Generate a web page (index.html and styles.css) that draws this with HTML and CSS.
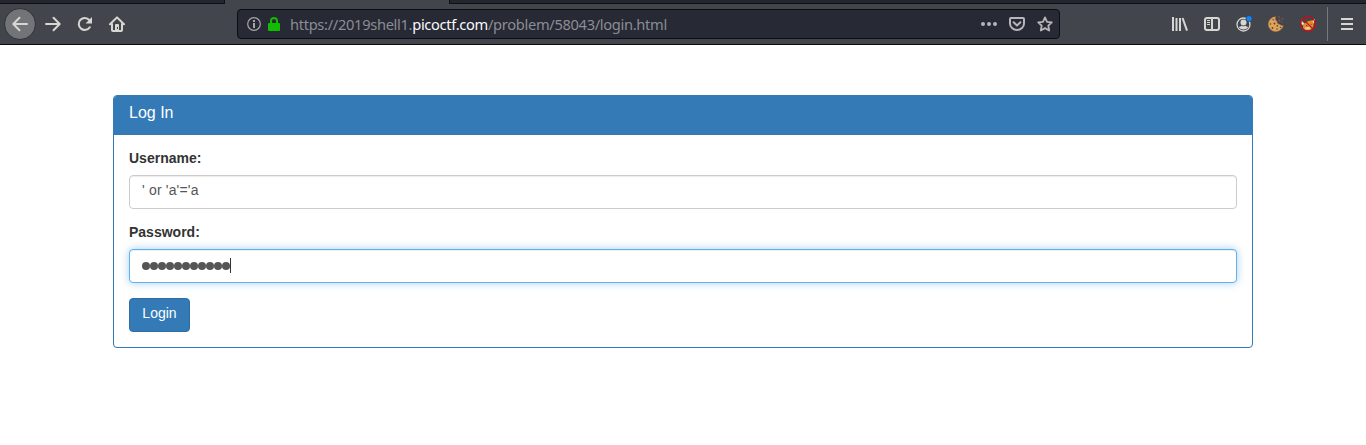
FILE: index.html
```html
<!DOCTYPE html>
<html lang="en">
<head>
<meta charset="utf-8">
<title>Log In</title>
<link rel="stylesheet" href="styles.css">
</head>
<body>
<header class="browser">
  <div class="tabs"><span class="tab-left"></span><span class="tab-active"></span><span class="tab-rest"></span></div>
  <div class="toolbar">
    <nav class="nav">
      <span class="back"><svg width="16" height="16" viewBox="0 0 16 16"><path d="M15 8H1.5M7.5 1.8L1.3 8l6.2 6.2" class="line"/></svg></span>
      <svg width="16" height="16" viewBox="0 0 16 16"><path d="M1 8h13.5M8.5 1.8L14.7 8l-6.2 6.2" class="line"/></svg>
      <svg width="16" height="16" viewBox="0 0 16 16"><path d="M12.8 11.2A6 6 0 1 1 12.3 4" class="line"/><path d="M15 1v6.4H8.6z" class="solid"/></svg>
      <svg width="16" height="16" viewBox="0 0 16 16"><path d="M1 8.3L8 1.4l7 6.9M3 8v6.1q0 .9.9.9h8.2q.9 0 .9-.9V8" class="line"/><path fill-rule="evenodd" d="M6 15V9q0-1 1-1h2q1 0 1 1v6zM8 11v2h1v-2z" class="solid"/></svg>
    </nav>
    <div class="address">
      <svg class="info" width="14" height="14" viewBox="0 0 14 14"><circle cx="7" cy="7" r="6.3" fill="none" stroke="#a5a6aa" stroke-width="1.2"/><path d="M6 3h2v2H6zM6 6h2v5H6z" fill="#a5a6aa"/></svg>
      <svg class="lock" width="12" height="14" viewBox="0 0 12 14"><path d="M3 7V4a3 3 0 0 1 6 0v3" fill="none" stroke="#12bc00" stroke-width="2"/><rect y="6" width="12" height="8" rx="1" fill="#12bc00"/></svg>
      <span class="url">https://2019shell1.<b>picoctf.com</b>/problem/58043/login.html</span>
      <svg class="dots" width="16" height="4" viewBox="0 0 16 4"><g fill="#b5b6b9"><circle cx="2" cy="2" r="2"/><circle cx="8" cy="2" r="2"/><circle cx="14" cy="2" r="2"/></g></svg>
      <svg class="pocket" width="16" height="14" viewBox="0 0 16 14"><path d="M2 1h12q1 0 1 1v4.5a7 6.5 0 0 1-14 0V2q0-1 1-1z" class="line muted"/><path d="M4.6 5.3L8 8.5l3.4-3.2" class="line muted"/></svg>
      <svg class="star" width="16" height="16" viewBox="0 0 16 16"><path d="M8 1.400l2 4.400 4.800.6-3.500 3.300.9 4.800L8 12.100l-4.200 2.400.9-4.800L1.200 6.400 6 5.800z" class="line muted thin"/></svg>
    </div>
    <div class="tools">
      <svg width="16" height="14" viewBox="0 0 16 14"><path d="M1 0v14M4.500 1v13M8 1v13M10.600 1l4.400 12.600" fill="none" stroke="#d6d6d2" stroke-width="2"/></svg>
      <svg width="16" height="14" viewBox="0 0 16 14"><rect x="1" y="1" width="14" height="12" rx="2" class="line"/><path d="M8 1v12" class="line"/><path d="M3 3.500h3M3 5.500h3M3 7.500h3" stroke="#d6d6d2"/></svg>
      <svg width="16" height="16" viewBox="0 0 16 16"><circle cx="7.500" cy="8.500" r="6.500" fill="none" stroke="#d6d6d2" stroke-width="1.300"/><circle cx="7.500" cy="6.500" r="3" class="solid"/><path d="M2.600 11q2.200-.3 3-1.200 1.900 1 3.800 0 .8.9 3 1.200-1.900 2.600-4.900 2.600T2.600 11z" class="solid"/><circle cx="13" cy="2.600" r="3.300" fill="#43454c"/><circle cx="13" cy="2.600" r="2.600" fill="#0a84ff"/></svg>
      <svg width="16" height="16" viewBox="0 0 16 16"><path d="M7.500.8Q6.300 4 9 5.500q0 3 3 3 1.200 1.800 3.200 1A7.500 7.400 0 1 1 7.500.8z" fill="#dba55f" stroke="#b57b3c" stroke-width=".5"/><g fill="#704423"><circle cx="5.200" cy="3.700" r=".8"/><circle cx="2.500" cy="8" r=".8"/><circle cx="6.500" cy="7.500" r="1"/><circle cx="4.500" cy="12" r=".9"/><circle cx="9" cy="13" r=".8"/><circle cx="9.300" cy="9.800" r=".9"/><circle cx="12.500" cy="11.500" r=".8"/></g><g fill="#936035"><circle cx="11" cy="1" r=".8"/><circle cx="14.500" cy="2.800" r=".8"/><circle cx="11.500" cy="4.500" r=".9"/><circle cx="14" cy="6" r=".6"/></g></svg>
      <svg width="16" height="16" viewBox="0 0 16 16"><path d="M1.500 4Q3 7 5 7.500q2.500-2.800 6-3 2 .2 3.500-1.500.8 3.500-1 5.500 0 4-3 5.200Q7.500 15 4.500 13.500 2.500 12 3 9.500.8 8 1.500 4z" fill="#e68a2a"/><path d="M1.300 3.500Q0 7 2.800 9l1.200-1.600Q2 6 1.300 3.500zM14.600 2.600q1 2.400-.6 4.400l-1.500-1.700q1.500-.7 2.100-2.700z" fill="#efeeea"/><path d="M4.500 12l3-1.200 3.500.7-1.500 1.800-3.500.4z" fill="#dfc9a9"/><path d="M6 9.500l1.500.4M10.500 8l1 .5" stroke="#67371b"/><circle cx="8" cy="8" r="7.300" fill="none" stroke="#c90d12" stroke-width="1.200"/><path d="M2.900 2.900l10.200 10.200" stroke="#c90d12" stroke-width="1.300"/></svg>
      <span class="divider"></span>
      <svg class="menu" width="12" height="12" viewBox="0 0 12 12"><path d="M0 1h12M0 6h12M0 11h12" stroke="#d6d6d2" stroke-width="2"/></svg>
    </div>
  </div>
</header>
<main class="container">
  <section class="panel">
    <h1 class="panel-heading">Log In</h1>
    <form class="panel-body">
      <div class="group"><label for="username">Username:</label><input id="username" class="control" type="text" value="' or 'a'='a"></div>
      <div class="group"><label for="password">Password:</label>
        <div class="control focused" id="password"><span class="mask"><i></i><i></i><i></i><i></i><i></i><i></i><i></i><i></i><i></i><i></i><i></i></span><span class="caret"></span></div></div>
      <button class="btn" type="button">Login</button>
    </form>
  </section>
</main>
</body>
</html>
```
FILE: styles.css
```css
* { box-sizing: border-box; }
body { margin: 0; background: #fff; color: #333; font: 14px/20px "Liberation Sans", Arial, sans-serif; overflow: hidden; }
svg { display: block; flex: none; overflow: visible; }
.line { fill: none; stroke: #d6d6d2; stroke-width: 2; stroke-linecap: round; stroke-linejoin: round; }
.solid { fill: #d6d6d2; }
.muted { stroke: #b5b6b9; }
.thin { stroke-width: 1.8; }
.browser { height: 45px; background: #43454c; border-bottom: 1px solid #0c0c0d; }
.tabs { height: 4px; display: flex; }
.tab-left, .tab-rest { background: #23252f; border-bottom: 1px solid #0f1016; }
.tab-left { width: 225px; border-right: 1px solid #0f1016; }
.tab-active { width: 224px; }
.tab-rest { flex: 1; border-left: 1px solid #0f1016; }
.toolbar { height: 40px; display: flex; align-items: center; padding-left: 4px; }
.nav { width: 233px; display: flex; align-items: center; gap: 16px; }
.back { width: 32px; height: 32px; border-radius: 50%; background: #737478; border: 1px solid #303137; display: flex; align-items: center; justify-content: center; margin-right: -7px; }
.address { width: 823px; height: 30px; background: #272935; border: 1px solid #0d0e14; border-radius: 4px; display: flex; align-items: center; padding: 0 6px 0 9px; }
.lock { margin-left: 7px; }
.url { margin-left: 10px; width: 400px; color: #8b8d94; font: 14.67px/20px "Noto Sans", sans-serif; letter-spacing: -.32px; white-space: nowrap; }
.url b { font-weight: 400; color: #f9f9fa; }
.dots { margin-left: auto; }
.pocket { margin-left: 12px; }
.star { margin-left: 12px; }
.tools { flex: 1; display: flex; align-items: center; gap: 16px; padding-left: 112px; }
.divider { width: 1px; height: 34px; background: #77787b; margin-left: -5px; }
.menu { margin-left: -3px; }
.container { width: 1140px; margin: 50px auto 0; }
.panel { height: 253px; border: 1px solid #337ab7; border-radius: 4px; box-shadow: 0 1px 1px rgba(0,0,0,.05); }
.panel-heading { margin: 0; height: 39px; padding: 8px 15px; background: #337ab7; color: #fff; font-size: 16px; line-height: 18px; font-weight: 400; border-radius: 3px 3px 0 0; }
.panel-body { padding: 13px 15px 15px; }
.group { margin-bottom: 15px; }
label { display: block; font-weight: 700; margin-bottom: 7px; line-height: 20px; height: 20px; }
.group + .group label { margin-top: -2px; }
.control { display: flex; align-items: center; width: 100%; height: 34px; padding: 4px 12px 8px; border: 1px solid #ccc; border-radius: 4px; background: #fff; color: #555; font: 14px/20px "Liberation Sans", Arial, sans-serif; letter-spacing: .18px; box-shadow: inset 0 1px 1px rgba(0,0,0,.075); }
.focused { border-color: #66afe9; box-shadow: inset 0 1px 1px rgba(0,0,0,.075), 0 0 8px rgba(102,175,233,.6); padding: 5px 12px 6px; }
.mask { display: flex; }
.mask i { width: 8px; height: 8px; border-radius: 50%; background: #555; }
.caret { width: 1px; height: 15px; background: #333; }
.btn { display: block; width: 61px; height: 34px; padding: 3px 0 7px; background: #337ab7; border: 1px solid #2e6da4; border-radius: 4px; color: #fff; font: 14px/20px "Liberation Sans", Arial, sans-serif; }
```
